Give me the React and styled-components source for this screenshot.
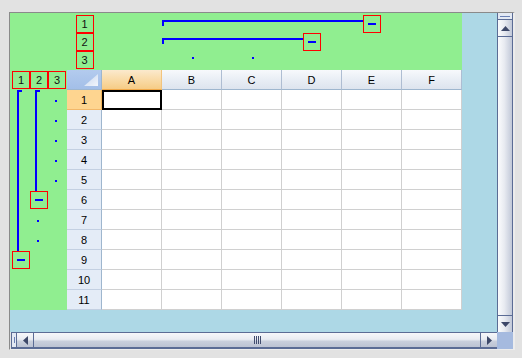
import React from 'react';
import styled, { createGlobalStyle } from 'styled-components';

const Global = createGlobalStyle`
  html, body { margin: 0; padding: 0; background: #e2e2e2; }
  body { font-family: "Liberation Sans", Arial, sans-serif; font-size: 11px; color: #000; }
`;

const DARK = '#5b6c95';
const BLUE = '#0000ff';
const RED = '#ff0000';

const Frame = styled.div`
  margin: 12px 0 0 9px;
  width: 506px;
  height: 338px;
  box-sizing: border-box;
  border-top: 1px solid #8a8a8a;
  border-left: 1px solid #8a8a8a;
  border-right: 2px solid #ececec;
  border-bottom: 1px solid #ececec;
  display: grid;
  grid-template-columns: 1fr 16px;
  grid-template-rows: 1fr 17px;
`;

const Viewport = styled.div`
  background: #add8e6;
  overflow: hidden;
`;

const Sheet = styled.div`
  display: grid;
  width: 452px;
  grid-template-columns: 2px repeat(3, 18px) 1px 35px repeat(6, 60px);
  grid-template-rows: 2px repeat(3, 18px) 1px 20px repeat(11, 20px);
  background: #90ee90;
`;

const Placed = styled.div`
  grid-area: ${p => p.$area};
`;

const LevelButton = styled(Placed)`
  width: 18px;
  height: 18px;
  box-sizing: border-box;
  border: 1px solid ${RED};
  justify-self: center;
  align-self: center;
  display: flex;
  align-items: center;
  justify-content: center;
  font-size: 11px;
  line-height: 1;
  color: #111;
`;

const CollapseButton = styled(LevelButton)``;

const Dash = styled.span`
  width: 8px;
  height: 2px;
  background: ${BLUE};
`;

const HBracket = styled(Placed)`
  align-self: start;
  box-sizing: border-box;
  height: 6px;
  margin-top: 5px;
  margin-right: 39px;
  border-top: 2px solid ${BLUE};
  border-left: 2px solid ${BLUE};
`;

const VBracket = styled(Placed)`
  justify-self: start;
  box-sizing: border-box;
  width: 5px;
  margin-left: 5px;
  margin-bottom: 19px;
  border-top: 2px solid ${BLUE};
  border-left: 2px solid ${BLUE};
`;

const Dot = styled(Placed)`
  width: 2px;
  height: 2px;
  background: ${BLUE};
  justify-self: ${p => (p.$top ? 'center' : 'start')};
  align-self: start;
  margin-left: ${p => (p.$top ? '2px' : '7px')};
  margin-top: ${p => (p.$top ? '6px' : '10px')};
`;

const Corner = styled(Placed)`
  box-sizing: border-box;
  background: linear-gradient(#b3cbee, #a3bfe8);
  border-right: 1px solid #9eb6ce;
  border-bottom: 1px solid #9eb6ce;
  display: flex;
  align-items: flex-end;
  justify-content: flex-end;
  padding: 0 3px 3px 0;
`;

const ColHead = styled(Placed)`
  box-sizing: border-box;
  display: flex;
  align-items: center;
  justify-content: center;
  border-right: 1px solid ${p => (p.$sel ? '#f2c47e' : '#aebdd2')};
  border-bottom: 1px solid ${p => (p.$sel ? '#f0a848' : '#9eb6ce')};
  background: ${p =>
    p.$sel
      ? 'linear-gradient(#fbe9cd, #f9dba8 50%, #f6cc86)'
      : 'linear-gradient(#f7f9fc, #e9eef5 50%, #dde4ee)'};
  padding-top: 1px;
`;

const RowHead = styled(Placed)`
  box-sizing: border-box;
  display: flex;
  align-items: center;
  justify-content: center;
  border-right: 1px solid ${p => (p.$sel ? '#f0b35a' : '#9eb6ce')};
  border-bottom: 1px solid ${p => (p.$sel ? '#f2b86a' : '#c3d0e2')};
  background: ${p => (p.$sel ? '#fed590' : '#e4ecf7')};
`;

const Cell = styled(Placed)`
  box-sizing: border-box;
  background: #fff;
  border-right: 1px solid #d0d0d0;
  border-bottom: 1px solid #d0d0d0;
  ${p => p.$sel && 'border: 2px solid #000;'}
`;

/* scrollbars */
const VScroll = styled.div`
  display: flex;
  flex-direction: column;
  border-left: 1px solid ${DARK};
  border-right: 1px solid ${DARK};
  background: linear-gradient(to right, #fbfcfd, #e8ebf1 45%, #c1c8d8);
`;

const VSplit = styled.div`
  height: 6px;
  border-bottom: 1px solid ${DARK};
  background: #e3e9f3;
  display: flex;
  align-items: center;
  justify-content: center;
  &::after {
    content: '';
    width: 10px;
    height: 1px;
    background: #6a80b4;
  }
`;

const VButton = styled.div`
  height: 17px;
  box-sizing: border-box;
  ${p => (p.$end ? `border-top: 1px solid ${DARK};` : `border-bottom: 1px solid ${DARK};`)}
  display: flex;
  align-items: center;
  justify-content: center;
`;

const Track = styled.div`
  flex: 1;
  display: flex;
  align-items: center;
  justify-content: center;
  gap: 1px;
`;

const Grip = styled.span`
  background: #414c6e;
  width: 1px;
  height: 8px;
`;

const HScroll = styled.div`
  display: flex;
  border-top: 1px solid ${DARK};
  border-bottom: 2px solid ${DARK};
  border-left: 1px solid ${DARK};
  margin-left: 1px;
  background: linear-gradient(#f6f7fa, #e9ecf2 45%, #c9cfdc 60%, #bcc3d3);
`;

const HSplit = styled.div`
  width: 4px;
  border-right: 1px solid ${DARK};
  background: #e3e9f3;
  display: flex;
  align-items: center;
  justify-content: center;
  &::after {
    content: '';
    width: 1px;
    height: 6px;
    background: #6a80b4;
  }
`;

const HButton = styled.div`
  width: 17px;
  box-sizing: border-box;
  ${p => (p.$end ? `border-left: 1px solid ${DARK};` : `border-right: 1px solid ${DARK};`)}
  display: flex;
  align-items: center;
  justify-content: center;
`;

const ScrollCorner = styled.div`
  background: #a5badf;
`;

const Tri = ({ dir }) => {
  const pts = {
    up: '0,5 4.5,0 9,5',
    down: '0,0 9,0 4.5,5',
    left: '5,0 5,9 0,4.5',
    right: '0,0 5,4.5 0,9',
  }[dir];
  const vert = dir === 'up' || dir === 'down';
  return (
    <svg width={vert ? 9 : 5} height={vert ? 5 : 9} viewBox={vert ? '0 0 9 5' : '0 0 5 9'}>
      <polygon points={pts} fill="#3d4869" />
    </svg>
  );
};

const COLS = ['A', 'B', 'C', 'D', 'E', 'F'];
const ROWS = [1, 2, 3, 4, 5, 6, 7, 8, 9, 10, 11];

export default function App() {
  return (
    <>
      <Global />
      <Frame>
        <Viewport>
          <Sheet>
            {/* top outline level buttons */}
            <LevelButton $area="2 / 6 / 3 / 7">1</LevelButton>
            <LevelButton $area="3 / 6 / 4 / 7">2</LevelButton>
            <LevelButton $area="4 / 6 / 5 / 7">3</LevelButton>

            {/* left outline level buttons */}
            <LevelButton $area="6 / 2 / 7 / 3">1</LevelButton>
            <LevelButton $area="6 / 3 / 7 / 4">2</LevelButton>
            <LevelButton $area="6 / 4 / 7 / 5">3</LevelButton>

            {/* column outline */}
            <HBracket $area="2 / 8 / 3 / 12" />
            <CollapseButton $area="2 / 11 / 3 / 12"><Dash /></CollapseButton>
            <HBracket $area="3 / 8 / 4 / 11" />
            <CollapseButton $area="3 / 10 / 4 / 11"><Dash /></CollapseButton>
            <Dot $top $area="4 / 8 / 5 / 9" />
            <Dot $top $area="4 / 9 / 5 / 10" />

            {/* row outline */}
            <VBracket $area="7 / 2 / 16 / 3" />
            <CollapseButton $area="15 / 2 / 16 / 3"><Dash /></CollapseButton>
            <VBracket $area="7 / 3 / 13 / 4" />
            <CollapseButton $area="12 / 3 / 13 / 4"><Dash /></CollapseButton>
            {[7, 8, 9, 10, 11].map(r => (
              <Dot key={'d3' + r} $area={`${r} / 4 / ${r + 1} / 5`} />
            ))}
            {[13, 14].map(r => (
              <Dot key={'d2' + r} $area={`${r} / 3 / ${r + 1} / 4`} />
            ))}

            {/* headers */}
            <Corner $area="6 / 6 / 7 / 7">
              <svg width="14" height="12" viewBox="0 0 14 12">
                <defs>
                  <linearGradient id="cg" x1="0" y1="0" x2="1" y2="1">
                    <stop offset="0" stopColor="#c4d5ee" />
                    <stop offset="1" stopColor="#f2f6fc" />
                  </linearGradient>
                </defs>
                <polygon points="14,0 14,12 0,12" fill="url(#cg)" />
              </svg>
            </Corner>
            {COLS.map((c, i) => (
              <ColHead key={c} $sel={i === 0} $area={`6 / ${7 + i} / 7 / ${8 + i}`}>
                {c}
              </ColHead>
            ))}
            {ROWS.map(r => (
              <React.Fragment key={r}>
                <RowHead $sel={r === 1} $area={`${6 + r} / 6 / ${7 + r} / 7`}>
                  {r}
                </RowHead>
                {COLS.map((c, i) => (
                  <Cell
                    key={c + r}
                    $sel={r === 1 && i === 0}
                    $area={`${6 + r} / ${7 + i} / ${7 + r} / ${8 + i}`}
                  />
                ))}
              </React.Fragment>
            ))}
          </Sheet>
        </Viewport>

        <VScroll>
          <VSplit />
          <VButton><Tri dir="up" /></VButton>
          <Track />
          <VButton $end><Tri dir="down" /></VButton>
        </VScroll>

        <HScroll>
          <HSplit />
          <HButton><Tri dir="left" /></HButton>
          <Track>
            <Grip />
            <Grip />
            <Grip />
            <Grip />
          </Track>
          <HButton $end><Tri dir="right" /></HButton>
        </HScroll>

        <ScrollCorner />
      </Frame>
    </>
  );
}
